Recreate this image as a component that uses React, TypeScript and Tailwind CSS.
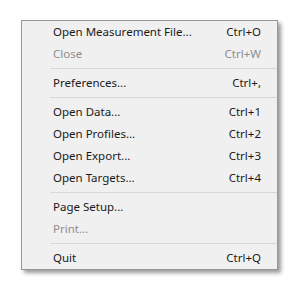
import React from "react";

type Item = { label: string; shortcut?: string; disabled?: boolean } | "sep";

const items: Item[] = [
  { label: "Open Measurement File...", shortcut: "Ctrl+O" },
  { label: "Close", shortcut: "Ctrl+W", disabled: true },
  "sep",
  { label: "Preferences...", shortcut: "Ctrl+," },
  "sep",
  { label: "Open Data...", shortcut: "Ctrl+1" },
  { label: "Open Profiles...", shortcut: "Ctrl+2" },
  { label: "Open Export...", shortcut: "Ctrl+3" },
  { label: "Open Targets...", shortcut: "Ctrl+4" },
  "sep",
  { label: "Page Setup..." },
  { label: "Print...", disabled: true },
  "sep",
  { label: "Quit", shortcut: "Ctrl+Q" },
];

const App = () => {
  return (
    <div className="w-[300px] h-[290px] bg-white pt-[20px] pl-[21px] font-['Noto_Sans',sans-serif] text-[11.5px]">
      <div className="w-[257px] h-[250px] bg-[#f0f0f0] border border-[#979797] shadow-[3px_3px_4px_rgba(0,0,0,0.4)] flex flex-col">
        {items.map((it, i) =>
          it === "sep" ? (
            <div key={i} className="h-[7px] flex items-center pl-[28px]">
              <div className="h-px w-full bg-[#d7d7d7]" />
            </div>
          ) : (
            <div
              key={i}
              className={`h-[22px] flex items-center justify-between pl-[31px] pr-[16px] ${
                it.disabled ? "text-[#8d8d8d]" : "text-[#1a1a1a]"
              }`}
            >
              <span>{it.label}</span>
              {it.shortcut && <span>{it.shortcut}</span>}
            </div>
          )
        )}
      </div>
    </div>
  );
};

export default App;
